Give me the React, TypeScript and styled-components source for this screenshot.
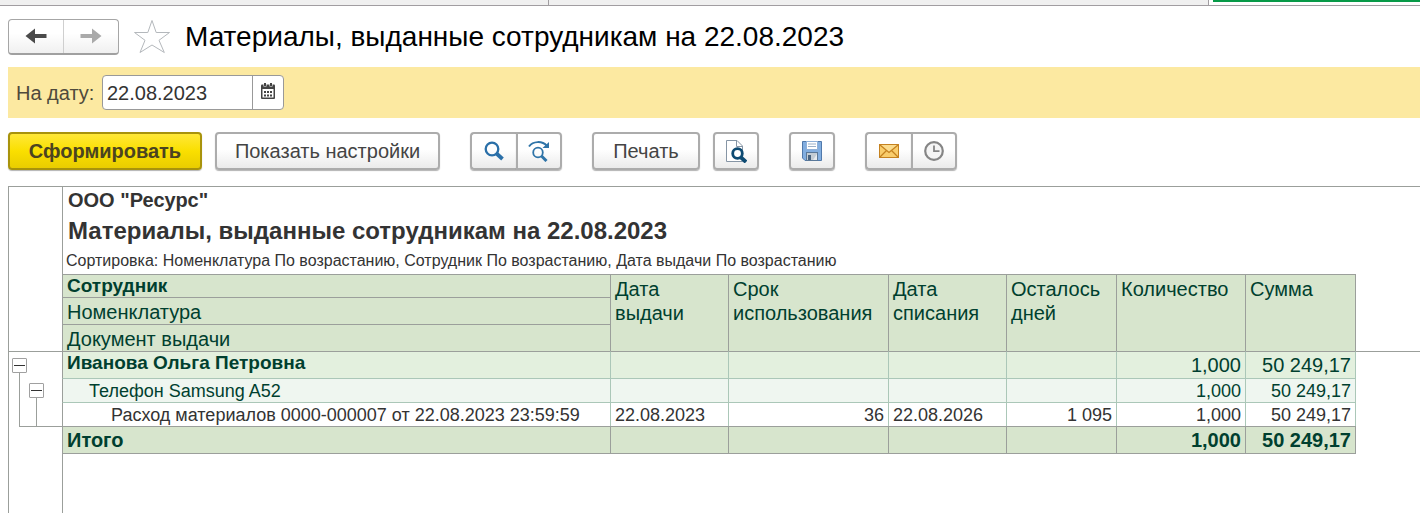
import React from "react";
import styled, { createGlobalStyle, css } from "styled-components";

const LINE = "#9b9f9b";
const SOFT_LINE = "#abc7b8";
const GREEN = "#003f2f";
const INK = "#333333";

const GlobalStyle = createGlobalStyle`
  *, *::before, *::after { box-sizing: border-box; }
  body {
    margin: 0;
    background: #ffffff;
    color: ${INK};
    font-family: "Liberation Sans", Arial, sans-serif;
  }
  button, input { font-family: inherit; }
`;

const Page = styled.div`
  display: flex;
  flex-direction: column;
  min-height: 100vh;
  overflow-x: hidden;
`;

const TabStrip = styled.nav`
  display: grid;
  grid-template-columns: 549fr 660fr 211fr;
  height: 6px;
  border-bottom: 1px solid #a19da1;
`;

const Tab = styled.div<{ $active?: boolean }>`
  background: ${(p) => (p.$active ? "#ffffff" : "#f0f0f0")};
  border-right: ${(p) => (p.$active ? "none" : "1px solid #a19da1")};
  padding-left: 4px;
`;

const ActiveMark = styled.div`
  height: 2px;
  background: #079a48;
`;

const Header = styled.header`
  display: flex;
  align-items: center;
  height: 61px;
  padding-left: 8px;
`;

const History = styled.div`
  display: flex;
  width: 111px;
  height: 36px;
  border: 1px solid #a6a6a6;
  border-bottom: 2px solid #a0a0a0;
  border-radius: 4px;
  background: linear-gradient(#ffffff 40%, #f0f0f0);
`;

const HistoryButton = styled.button`
  display: flex;
  flex: 1;
  align-items: center;
  justify-content: center;
  padding: 0;
  border: 0;
  background: none;

  & + & {
    border-left: 1px solid #cfcfcf;
  }
`;

const StarButton = styled.button`
  display: flex;
  margin: 0 14px;
  padding: 0;
  border: 0;
  background: none;
`;

const PageTitle = styled.h1`
  margin: 0;
  color: #000000;
  font-size: 28px;
  font-weight: 400;
  line-height: 32px;
  white-space: nowrap;
`;

const FilterBar = styled.div`
  display: flex;
  align-items: center;
  height: 51px;
  margin-left: 8px;
  padding-left: 8px;
  background: #fce9a1;
`;

const FilterLabel = styled.label`
  width: 86px;
  padding-top: 2px;
  color: #4f4a3c;
  font-size: 20px;
  white-space: nowrap;
`;

const DateField = styled.div`
  display: flex;
  width: 182px;
  height: 35px;
  overflow: hidden;
  border: 1px solid #999999;
  border-radius: 4px;
  background: #ffffff;
`;

const DateInput = styled.input`
  flex: 1;
  min-width: 0;
  padding: 2px 4px 0;
  border: 0;
  outline: 0;
  background: none;
  color: ${INK};
  font-size: 20px;
`;

const CalendarButton = styled.button`
  display: flex;
  align-items: center;
  justify-content: center;
  width: 31px;
  padding: 0 0 4px;
  border: 0;
  border-left: 1px solid #999999;
  background: none;
`;

const Toolbar = styled.div`
  display: flex;
  gap: 30px;
  padding: 14px 8px 16px;
`;

const ToolGroup = styled.div<{ $joined?: boolean }>`
  display: flex;
  gap: ${(p) => (p.$joined ? "0" : "13px")};

  ${(p) =>
    p.$joined &&
    css`
      & > button:not(:first-child) {
        border-top-left-radius: 0;
        border-bottom-left-radius: 0;
      }
      & > button:not(:last-child) {
        border-right-width: 0;
        border-top-right-radius: 0;
        border-bottom-right-radius: 0;
      }
    `}
`;

const ToolButton = styled.button<{ $width: number; $primary?: boolean }>`
  display: flex;
  align-items: center;
  justify-content: center;
  width: ${(p) => p.$width}px;
  height: 38px;
  padding: 0;
  border: 2px solid ${(p) => (p.$primary ? "#a8930c" : "#acacac")};
  border-radius: 4px;
  background: ${(p) =>
    p.$primary
      ? "linear-gradient(#ffe838, #fadf00 50%, #e9cd00)"
      : "linear-gradient(#ffffff 45%, #ebebeb)"};
  box-shadow: 0 1px 1px rgba(0, 0, 0, 0.3);
  color: ${(p) => (p.$primary ? "#4b4420" : "#444444")};
  font-size: 20px;
  font-weight: ${(p) => (p.$primary ? 700 : 400)};
  white-space: nowrap;
`;

const Report = styled.main`
  display: flex;
  flex: 1;
  flex-direction: column;
  margin-left: 8px;
  border-top: 1px solid ${LINE};
  border-left: 1px solid ${LINE};
`;

const ReportHead = styled.div`
  margin-left: 53px;
  padding-left: 5px;
  border-left: 1px solid ${LINE};
  white-space: nowrap;
`;

const Company = styled.div`
  font-size: 20px;
  font-weight: 700;
  line-height: 27px;
`;

const ReportTitle = styled.h2`
  margin: 0;
  font-size: 24px;
  font-weight: 700;
  line-height: 34px;
`;

const SortNote = styled.div`
  margin-left: -2px;
  font-size: 16px;
  line-height: 26px;
`;

const ReportTail = styled.div`
  flex: 1;
  margin-left: 53px;
  border-left: 1px solid ${LINE};
`;

const Table = styled.table`
  width: 100%;
  table-layout: fixed;
  border-collapse: separate;
  border-spacing: 0;
`;

type Tone = "header" | "group" | "item" | "plain" | "total";

const toneFill: Record<Tone, string> = {
  header: "#d7e5cd",
  group: "#e3f0de",
  item: "#eff6f0",
  plain: "#ffffff",
  total: "#d7e5cd",
};

const Row = styled.tr<{ $height: number }>`
  height: ${(p) => p.$height}px;
`;

const cellBase = css<{ $tone: Tone }>`
  padding: 0 4px;
  border-top: 1px solid ${LINE};
  border-left: 1px solid ${LINE};
  background: ${(p) => toneFill[p.$tone]};
  color: ${(p) => (p.$tone === "plain" ? INK : GREEN)};
  white-space: nowrap;
`;

const HeadCell = styled.th<{ $tone: Tone; $strong?: boolean }>`
  ${cellBase}
  padding-top: ${(p) => (p.$strong ? 0 : 2)}px;
  font-size: ${(p) => (p.$strong ? 19 : 20)}px;
  font-weight: ${(p) => (p.$strong ? 700 : 400)};
  line-height: ${(p) => (p.$strong ? 22 : 24)}px;
  text-align: left;
  vertical-align: top;
  white-space: normal;
`;

const Cell = styled.td<{ $tone: Tone; $right?: boolean }>`
  ${cellBase}
  font-size: ${(p) => (p.$tone === "item" || p.$tone === "plain" ? 18 : 20)}px;
  font-weight: ${(p) => (p.$tone === "total" ? 700 : 400)};
  line-height: 22px;
  text-align: ${(p) => (p.$right ? "right" : "left")};
  ${(p) => p.$tone !== "total" && css`border-left-color: ${SOFT_LINE};`}
  ${(p) =>
    (p.$tone === "item" || p.$tone === "plain") &&
    css`border-top-color: ${SOFT_LINE};`}
`;

const NameCell = styled(Cell)<{ $level: number }>`
  padding-left: ${(p) => 4 + p.$level * 22}px;
  border-left-color: ${LINE};
  ${(p) =>
    p.$tone === "group" &&
    css`
      font-size: 19px;
      font-weight: 700;
      vertical-align: top;
    `}
`;

const GutterCell = styled.td<{ $ruled?: boolean }>`
  padding: 0;
  border-top: ${(p) => (p.$ruled ? `1px solid ${LINE}` : "none")};
  vertical-align: top;
`;

const FillerCell = styled.td<{ $ruled?: boolean; $soft?: boolean }>`
  padding: 0;
  border-top: ${(p) => (p.$ruled ? `1px solid ${LINE}` : "none")};
  border-left: 1px solid ${(p) => (p.$soft ? SOFT_LINE : LINE)};
`;

const Tree = styled.div`
  display: flex;
  gap: 2px;
  height: 74px;
  padding-left: 3px;
`;

const Branch = styled.div<{ $top: number }>`
  display: flex;
  flex-direction: column;
  padding-top: ${(p) => p.$top}px;

  &::after {
    content: "";
    flex: 1;
    width: 1px;
    margin-left: 7px;
    background: ${LINE};
  }
`;

const Toggle = styled.button`
  display: flex;
  align-items: center;
  justify-content: center;
  width: 15px;
  height: 15px;
  padding: 0;
  border: 1px solid #a0a0a0;
  border-radius: 1px;
  background: #ffffff;

  &::before {
    content: "";
    width: 11px;
    height: 1px;
    background: #333333;
  }
`;

const TreeEnd = styled.div`
  height: 1px;
  margin-left: 10px;
  background: ${LINE};
`;

const TableFoot = styled.div`
  display: grid;
  grid-template-columns: 1294px;
  padding-left: 53px;

  &::after {
    content: "";
    height: 1px;
    background: ${LINE};
  }
`;

const ArrowIcon = ({ back, color }: { back?: boolean; color: string }) => (
  <svg width="22" height="16" viewBox="0 0 22 16" aria-hidden="true">
    <path
      d={back ? "M0.500 8 L10 0.500 V6 H21.500 V10 H10 V15.500 Z" : "M21.500 8 L12 0.500 V6 H0.500 V10 H12 V15.500 Z"}
      fill={color}
    />
  </svg>
);

const StarIcon = () => (
  <svg width="38" height="36" viewBox="0 0 38 36" aria-hidden="true">
    <path
      d="M19 1.500 L23.200 13.500 H36.500 L26 21.300 L31.300 33.500 L19 26 L7 33.500 L12 21.300 L1.500 13.500 H14.800 Z"
      fill="#ffffff"
      stroke="#b4b8bc"
      strokeWidth="1"
    />
  </svg>
);

const CalendarIcon = () => (
  <svg width="14" height="16" viewBox="0 0 14 16" aria-hidden="true">
    <path d="M0 2.500 Q0 1.500 1 1.500 H13 Q14 1.500 14 2.500 V15 Q14 16 13 16 H1 Q0 16 0 15 Z" fill="#444444" />
    <rect x="1.500" y="6" width="11" height="8.500" fill="#ffffff" />
    <path d="M2.500 0 h3 v3.500 h-3 Z M8.500 0 h3 v3.500 h-3 Z" fill="#ffffff" />
    <path d="M3 0 h2 v3 h-2 Z M9 0 h2 v3 h-2 Z" fill="#444444" />
    <path d="M3 8 h2 v2 h-2 Z M6 8 h2 v2 h-2 Z M9 8 h2 v2 h-2 Z M3 11.500 h2 v2 h-2 Z M6 11.500 h2 v2 h-2 Z M9 11.500 h2 v2 h-2 Z" fill="#444444" />
  </svg>
);

const SearchIcon = () => (
  <svg width="20" height="20" viewBox="0 0 20 20" fill="none" stroke="#2a6fa8" aria-hidden="true">
    <circle cx="8" cy="8" r="6.300" strokeWidth="2.300" />
    <path d="M12.500 12.500 L18.500 18" strokeWidth="3.800" />
  </svg>
);

const SearchNextIcon = () => (
  <svg width="22" height="22" viewBox="0 0 22 22" fill="none" stroke="#2f74a8" aria-hidden="true">
    <path d="M1 6.500 C5 1 14 0.500 19 6" strokeWidth="2" />
    <path d="M21 2 V8 H14.500 Z" fill="#2f74a8" stroke="none" />
    <circle cx="10" cy="12.500" r="4.800" strokeWidth="1.800" />
    <path d="M13.500 16 L18.500 21" strokeWidth="3" />
  </svg>
);

const PreviewIcon = () => (
  <svg width="22" height="24" viewBox="0 0 22 24" aria-hidden="true">
    <path d="M1.500 1.500 H12 L17.500 7 V22.500 H1.500 Z" fill="#ffffff" stroke="#8695a5" />
    <path d="M11.500 1.500 V7.500 H17.500" fill="none" stroke="#8695a5" />
    <circle cx="12.500" cy="14.500" r="4.800" fill="#ffffff" stroke="#0d4a72" strokeWidth="2.800" />
    <path d="M16 18.500 L21 23" stroke="#0d4a72" strokeWidth="3.800" />
  </svg>
);

const SaveIcon = () => (
  <svg width="20" height="20" viewBox="0 0 20 20" aria-hidden="true">
    <path d="M0.500 0.500 H19.500 V19.500 H3 L0.500 17 Z" fill="#82aee0" stroke="#5079ab" />
    <rect x="4.500" y="0.500" width="11" height="8" fill="#ffffff" stroke="#8fb0d8" />
    <path d="M6 3 H14 M6 5.500 H14" stroke="#9bb0c8" />
    <rect x="4.500" y="11.500" width="11" height="8" fill="#c3ccd4" stroke="#5a7898" />
    <rect x="6" y="14" width="3" height="5" fill="#49637f" />
    <path d="M11 19 L15 13 V19 Z" fill="#e6ebef" />
  </svg>
);

const MailIcon = () => (
  <svg width="20" height="14" viewBox="0 0 20 14" aria-hidden="true">
    <rect x="0.500" y="0.500" width="19" height="13" fill="#f9cd6c" stroke="#c58220" />
    <path d="M1 13 L7.500 6.500 M19 13 L12.500 6.500" stroke="#c58220" strokeWidth="1.300" />
    <path d="M1 1 L10 8.500 L19 1" fill="#fbdc8e" stroke="#c58220" strokeWidth="1.300" />
  </svg>
);

const ClockIcon = () => (
  <svg width="20" height="20" viewBox="0 0 20 20" fill="none" stroke="#858585" aria-hidden="true">
    <circle cx="10" cy="10" r="8.800" fill="#f4f4f4" strokeWidth="2.200" />
    <path d="M10 4.500 V10.200 H15.500" strokeWidth="1.800" />
  </svg>
);

const columnWidths = [53, 548, 118, 160, 118, 110, 129, 110];

const sideHeaders = [
  "Дата выдачи",
  "Срок использования",
  "Дата списания",
  "Осталось дней",
  "Количество",
  "Сумма",
];

interface ReportRow {
  tone: Tone;
  level: number;
  name: string;
  issued?: string;
  term?: string;
  writeOff?: string;
  daysLeft?: string;
  quantity: string;
  amount: string;
  height: number;
}

const rows: ReportRow[] = [
  { tone: "group", level: 0, name: "Иванова Ольга Петровна", quantity: "1,000", amount: "50 249,17", height: 27 },
  { tone: "item", level: 1, name: "Телефон Samsung A52", quantity: "1,000", amount: "50 249,17", height: 24 },
  {
    tone: "plain",
    level: 2,
    name: "Расход материалов 0000-000007 от 22.08.2023 23:59:59",
    issued: "22.08.2023",
    term: "36",
    writeOff: "22.08.2026",
    daysLeft: "1 095",
    quantity: "1,000",
    amount: "50 249,17",
    height: 24,
  },
  { tone: "total", level: 0, name: "Итого", quantity: "1,000", amount: "50 249,17", height: 27 },
];

export default function App() {
  return (
    <Page>
      <GlobalStyle />
      <TabStrip>
        <Tab />
        <Tab />
        <Tab $active>
          <ActiveMark />
        </Tab>
      </TabStrip>

      <Header>
        <History>
          <HistoryButton aria-label="Назад">
            <ArrowIcon back color="#4a4a4a" />
          </HistoryButton>
          <HistoryButton aria-label="Вперед">
            <ArrowIcon color="#aaaaaa" />
          </HistoryButton>
        </History>
        <StarButton aria-label="В избранное">
          <StarIcon />
        </StarButton>
        <PageTitle>Материалы, выданные сотрудникам на 22.08.2023</PageTitle>
      </Header>

      <FilterBar>
        <FilterLabel htmlFor="report-date">На дату:</FilterLabel>
        <DateField>
          <DateInput id="report-date" type="text" defaultValue="22.08.2023" />
          <CalendarButton aria-label="Выбрать дату">
            <CalendarIcon />
          </CalendarButton>
        </DateField>
      </FilterBar>

      <Toolbar>
        <ToolGroup>
          <ToolButton $width={194} $primary>Сформировать</ToolButton>
          <ToolButton $width={225}>Показать настройки</ToolButton>
        </ToolGroup>
        <ToolGroup $joined>
          <ToolButton $width={46} aria-label="Найти"><SearchIcon /></ToolButton>
          <ToolButton $width={46} aria-label="Найти далее"><SearchNextIcon /></ToolButton>
        </ToolGroup>
        <ToolGroup>
          <ToolButton $width={108}>Печать</ToolButton>
          <ToolButton $width={46} aria-label="Предварительный просмотр"><PreviewIcon /></ToolButton>
        </ToolGroup>
        <ToolGroup>
          <ToolButton $width={46} aria-label="Сохранить"><SaveIcon /></ToolButton>
        </ToolGroup>
        <ToolGroup $joined>
          <ToolButton $width={46} aria-label="Отправить по почте"><MailIcon /></ToolButton>
          <ToolButton $width={46} aria-label="Расписание"><ClockIcon /></ToolButton>
        </ToolGroup>
      </Toolbar>

      <Report>
        <ReportHead>
          <Company>ООО "Ресурс"</Company>
          <ReportTitle>Материалы, выданные сотрудникам на 22.08.2023</ReportTitle>
          <SortNote>
            Сортировка: Номенклатура По возрастанию, Сотрудник По возрастанию, Дата выдачи По возрастанию
          </SortNote>
        </ReportHead>

        <Table>
          <colgroup>
            {columnWidths.map((width, i) => (
              <col key={i} width={width} />
            ))}
            <col />
          </colgroup>
          <thead>
            <Row $height={23}>
              <GutterCell rowSpan={3} />
              <HeadCell $tone="header" $strong scope="col">Сотрудник</HeadCell>
              {sideHeaders.map((title) => (
                <HeadCell key={title} $tone="header" rowSpan={3} scope="col">{title}</HeadCell>
              ))}
              <FillerCell rowSpan={3} />
            </Row>
            <Row $height={27}>
              <HeadCell $tone="header" scope="col">Номенклатура</HeadCell>
            </Row>
            <Row $height={27}>
              <HeadCell $tone="header" scope="col">Документ выдачи</HeadCell>
            </Row>
          </thead>
          <tbody>
            {rows.map((row, i) => (
              <Row key={row.name} $height={row.height}>
                {i === 0 && (
                  <GutterCell rowSpan={3} $ruled>
                    <Tree>
                      <Branch $top={6}><Toggle aria-label="Свернуть группу сотрудника" /></Branch>
                      <Branch $top={31}><Toggle aria-label="Свернуть группу номенклатуры" /></Branch>
                    </Tree>
                  </GutterCell>
                )}
                {row.tone === "total" && (
                  <GutterCell><TreeEnd /></GutterCell>
                )}
                <NameCell $tone={row.tone} $level={row.level}>{row.name}</NameCell>
                <Cell $tone={row.tone}>{row.issued}</Cell>
                <Cell $tone={row.tone} $right>{row.term}</Cell>
                <Cell $tone={row.tone}>{row.writeOff}</Cell>
                <Cell $tone={row.tone} $right>{row.daysLeft}</Cell>
                <Cell $tone={row.tone} $right>{row.quantity}</Cell>
                <Cell $tone={row.tone} $right>{row.amount}</Cell>
                <FillerCell $ruled={i === 0} $soft={row.tone !== "total"} />
              </Row>
            ))}
          </tbody>
        </Table>
        <TableFoot />
        <ReportTail />
      </Report>
    </Page>
  );
}
